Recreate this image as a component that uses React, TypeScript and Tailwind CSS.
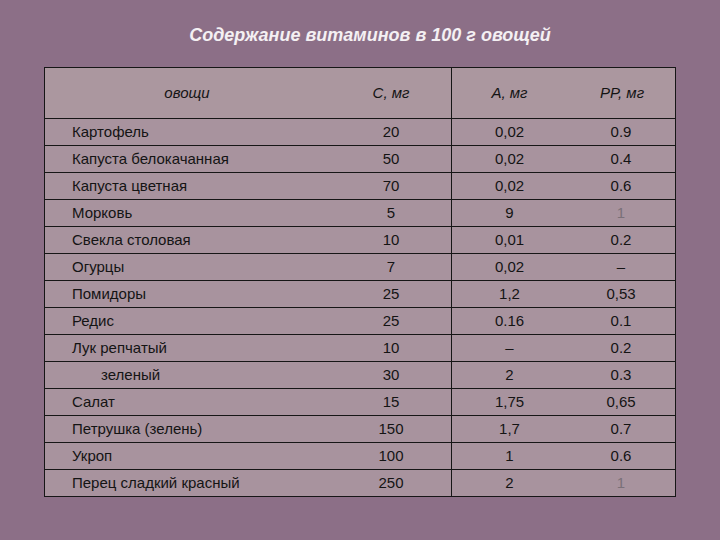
const rows: { name: string; c: string; a: string; pp: string; indent?: boolean; ppLight?: boolean }[] = [
  { name: "Картофель", c: "20", a: "0,02", pp: "0.9" },
  { name: "Капуста белокачанная", c: "50", a: "0,02", pp: "0.4" },
  { name: "Капуста цветная", c: "70", a: "0,02", pp: "0.6" },
  { name: "Морковь", c: "5", a: "9", pp: "1", ppLight: true },
  { name: "Свекла столовая", c: "10", a: "0,01", pp: "0.2" },
  { name: "Огурцы", c: "7", a: "0,02", pp: "–" },
  { name: "Помидоры", c: "25", a: "1,2", pp: "0,53" },
  { name: "Редис", c: "25", a: "0.16", pp: "0.1" },
  { name: "Лук репчатый", c: "10", a: "–", pp: "0.2" },
  { name: "зеленый", c: "30", a: "2", pp: "0.3", indent: true },
  { name: "Салат", c: "15", a: "1,75", pp: "0,65" },
  { name: "Петрушка (зелень)", c: "150", a: "1,7", pp: "0.7" },
  { name: "Укроп", c: "100", a: "1", pp: "0.6" },
  { name: "Перец сладкий красный", c: "250", a: "2", pp: "1", ppLight: true },
];

export default function App() {
  return (
    <div className="w-[720px] h-[540px] bg-[#8c6f87] overflow-hidden font-['Liberation_Sans',Arial,sans-serif]">
      <h1 className="pt-[23px] pl-[20px] text-center text-[18px] leading-[24px] italic font-bold text-[#f4f0f3]">
        Содержание витаминов в 100 г овощей
      </h1>

      <div className="mt-[20px] ml-[44px] w-[632px] border border-[#161616] bg-[#a8939e] text-[#141414]">
        {/* header */}
        <div className="grid grid-cols-[296px_110px_116px_108px] h-[50px] items-center italic text-[15px] bg-[#ab979f]">
          <div className="text-center pr-[12px]">овощи</div>
          <div className="text-center pr-[10px] h-full flex items-center justify-center">С, мг</div>
          <div className="text-center h-full flex items-center justify-center border-l border-[#161616]">А, мг</div>
          <div className="text-center pl-[2px]">PP, мг</div>
        </div>

        {rows.map((r) => (
          <div
            key={r.name}
            className="grid grid-cols-[296px_110px_116px_108px] h-[27px] items-center text-[15px] border-t border-[#161616]"
          >
            <div className={r.indent ? "pl-[56px]" : "pl-[27px]"}>{r.name}</div>
            <div className="text-center pr-[10px]">{r.c}</div>
            <div className="text-center h-full flex items-center justify-center border-l border-[#161616]">
              {r.a}
            </div>
            <div className={r.ppLight ? "text-center text-[#7a7078]" : "text-center"}>{r.pp}</div>
          </div>
        ))}
      </div>
    </div>
  );
}
